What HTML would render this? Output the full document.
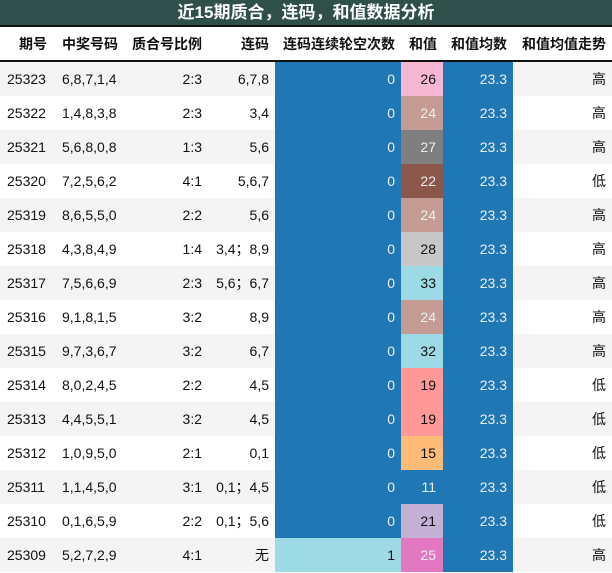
<!DOCTYPE html><html><head><meta charset="utf-8"><style>
body{margin:0;width:612px;height:573px;overflow:hidden;background:#fff;font-family:"Liberation Sans","Noto Sans CJK SC",sans-serif;font-size:14px;color:#111}
.t{height:25px;background:#2f4f4a;color:#fff;font-weight:bold;font-size:17px;text-align:center;line-height:25px;border-bottom:2px solid #111;box-sizing:content-box}
table{border-collapse:collapse;table-layout:fixed;width:612px}
td,th{padding:0 6px 0 0;text-align:right;height:34px;white-space:nowrap;overflow:hidden}
th{font-weight:bold;height:33px;border-bottom:2px solid #111;font-size:14px}
td:first-child{text-align:left;padding-left:7px}
th:first-child{text-align:right;padding-right:8px}
td:nth-child(2),th:nth-child(2){text-align:left;padding-left:7px}
tr:nth-child(odd) td{background:#f4f4f4}
td.b{background:#1f77b4!important;color:#eee}
td.l{background:#9edae5!important;color:#111}
td.s{padding-right:7px}
</style></head><body>
<div class="t">近15期质合，连码，和值数据分析</div>
<table>
<colgroup><col style="width:55px"><col style="width:70px"><col style="width:83px"><col style="width:67px"><col style="width:126px"><col style="width:42px"><col style="width:70px"><col style="width:99px"></colgroup>
<thead><tr><th>期号</th><th>中奖号码</th><th>质合号比例</th><th>连码</th><th>连码连续轮空次数</th><th>和值</th><th>和值均数</th><th>和值均值走势</th></tr></thead>
<tbody>
<tr><td>25323</td><td>6,8,7,1,4</td><td>2:3</td><td>6,7,8</td><td class="b">0</td><td class="s" style="background:#f7b6d2">26</td><td class="b">23.3</td><td>高</td></tr>
<tr><td>25322</td><td>1,4,8,3,8</td><td>2:3</td><td>3,4</td><td class="b">0</td><td class="s" style="background:#c49c94;color:#eee">24</td><td class="b">23.3</td><td>高</td></tr>
<tr><td>25321</td><td>5,6,8,0,8</td><td>1:3</td><td>5,6</td><td class="b">0</td><td class="s" style="background:#7f7f7f;color:#eee">27</td><td class="b">23.3</td><td>高</td></tr>
<tr><td>25320</td><td>7,2,5,6,2</td><td>4:1</td><td>5,6,7</td><td class="b">0</td><td class="s" style="background:#8c564b;color:#eee">22</td><td class="b">23.3</td><td>低</td></tr>
<tr><td>25319</td><td>8,6,5,5,0</td><td>2:2</td><td>5,6</td><td class="b">0</td><td class="s" style="background:#c49c94;color:#eee">24</td><td class="b">23.3</td><td>高</td></tr>
<tr><td>25318</td><td>4,3,8,4,9</td><td>1:4</td><td>3,4；8,9</td><td class="b">0</td><td class="s" style="background:#c7c7c7">28</td><td class="b">23.3</td><td>高</td></tr>
<tr><td>25317</td><td>7,5,6,6,9</td><td>2:3</td><td>5,6；6,7</td><td class="b">0</td><td class="s" style="background:#9edae5">33</td><td class="b">23.3</td><td>高</td></tr>
<tr><td>25316</td><td>9,1,8,1,5</td><td>3:2</td><td>8,9</td><td class="b">0</td><td class="s" style="background:#c49c94;color:#eee">24</td><td class="b">23.3</td><td>高</td></tr>
<tr><td>25315</td><td>9,7,3,6,7</td><td>3:2</td><td>6,7</td><td class="b">0</td><td class="s" style="background:#9edae5">32</td><td class="b">23.3</td><td>高</td></tr>
<tr><td>25314</td><td>8,0,2,4,5</td><td>2:2</td><td>4,5</td><td class="b">0</td><td class="s" style="background:#ff9896">19</td><td class="b">23.3</td><td>低</td></tr>
<tr><td>25313</td><td>4,4,5,5,1</td><td>3:2</td><td>4,5</td><td class="b">0</td><td class="s" style="background:#ff9896">19</td><td class="b">23.3</td><td>低</td></tr>
<tr><td>25312</td><td>1,0,9,5,0</td><td>2:1</td><td>0,1</td><td class="b">0</td><td class="s" style="background:#ffbb78">15</td><td class="b">23.3</td><td>低</td></tr>
<tr><td>25311</td><td>1,1,4,5,0</td><td>3:1</td><td>0,1；4,5</td><td class="b">0</td><td class="s" style="background:#1f77b4;color:#eee">11</td><td class="b">23.3</td><td>低</td></tr>
<tr><td>25310</td><td>0,1,6,5,9</td><td>2:2</td><td>0,1；5,6</td><td class="b">0</td><td class="s" style="background:#c5b0d5">21</td><td class="b">23.3</td><td>低</td></tr>
<tr><td>25309</td><td>5,2,7,2,9</td><td>4:1</td><td>无</td><td class="l">1</td><td class="s" style="background:#e377c2;color:#eee">25</td><td class="b">23.3</td><td>高</td></tr>
</tbody></table>
</body></html>
